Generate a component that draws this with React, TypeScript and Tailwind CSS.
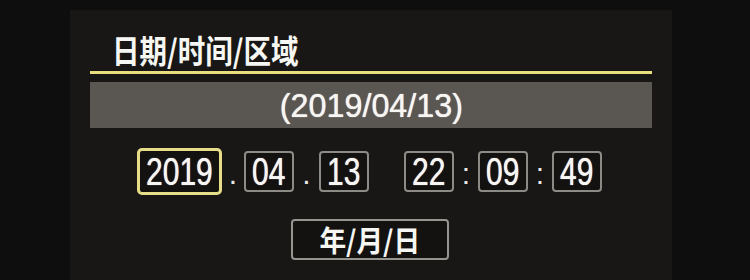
import React from 'react';

const cjk = { fontFamily: '"Noto Sans CJK SC", "Noto Sans", sans-serif' };
const num = { fontFamily: '"Liberation Sans", Arial, sans-serif' };

const Field = ({ value, active }: { value: string; active?: boolean }) => (
  <div
    className={
      active
        ? 'flex h-[47px] w-[85px] items-center justify-center rounded-[5px] border-[3px] border-[#e6dd88] bg-[#131211]'
        : 'flex h-[41px] w-[50px] items-center justify-center rounded-[4px] border-2 border-[#8d8b86] bg-[#131211]'
    }
  >
    <span className="inline-block scale-x-[0.77] text-[39px] leading-none text-[#f7f6f2] [text-shadow:0_0_1px_#fff]" style={num}>
      {value}
    </span>
  </div>
);

const Sep = ({ char, width }: { char: string; width: string }) => (
  <div className={`${width} flex h-[47px] items-end justify-center pb-[6px] text-[30px] leading-none text-[#e9e8e3]`} style={num}>
    {char}
  </div>
);

export default function App() {
  return (
    <div className="h-[280px] w-[750px] overflow-hidden bg-[#0e0e0e]">
      <div className="ml-[70px] mt-[10px] flex h-[270px] w-[602px] flex-col bg-[#181715]">
        <div className="ml-[42px] mt-[23px] h-[32px] leading-[32px]">
          <span className="inline-block origin-left scale-x-[0.86] text-[32px] font-bold leading-[32px] text-[#f6f6f2]" style={cjk}>
            日期/时间/区域
          </span>
        </div>
        <div className="ml-[20px] mt-[6px] h-[3px] w-[562px] bg-[#e9df7c]" />
        <div className="ml-[20px] mt-[8px] flex h-[46px] w-[562px] items-center justify-center bg-[#5a5752]">
          <span className="inline-block scale-x-[0.95] text-[34px] leading-none text-[#f7f6f2] [text-shadow:0_0_1px_#fff]" style={num}>
            (2019/04/13)
          </span>
        </div>
        <div className="ml-[67px] mt-[20px] flex items-center">
          <Field value="2019" active />
          <Sep char="." width="w-[22px]" />
          <Field value="04" />
          <Sep char="." width="w-[25px]" />
          <Field value="13" />
          <div className="w-[35px]" />
          <Field value="22" />
          <Sep char=":" width="w-[24px]" />
          <Field value="09" />
          <Sep char=":" width="w-[24px]" />
          <Field value="49" />
        </div>
        <div className="ml-[221px] mt-[24px] flex h-[41px] w-[158px] items-center justify-center rounded-[4px] border-2 border-[#96948f] bg-[#131211]">
          <span className="inline-block scale-x-[0.92] text-[29px] font-bold leading-none text-[#f6f6f2]" style={cjk}>
            年/月/日
          </span>
        </div>
      </div>
    </div>
  );
}
